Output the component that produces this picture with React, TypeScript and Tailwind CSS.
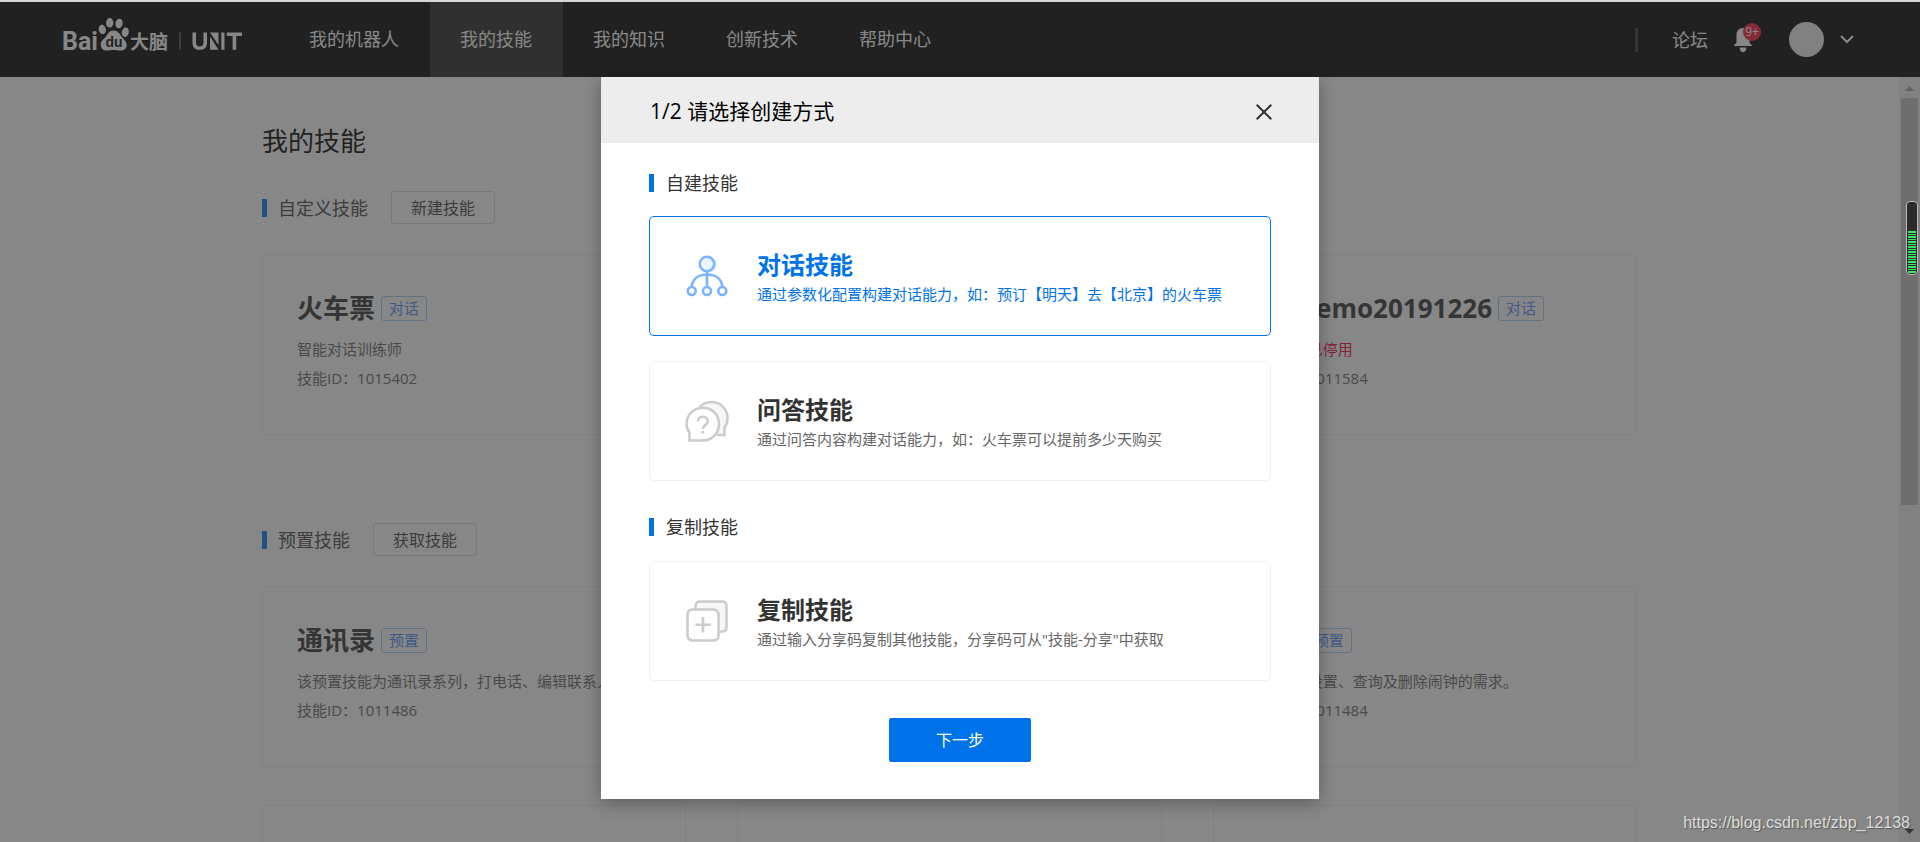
import React from "react";

type Skill = { name: string; tag: string; desc: string; id: string; disabled?: boolean };

const customSkills: Skill[] = [
  { name: "火车票", tag: "对话", desc: "智能对话训练师", id: "1015402" },
  { name: "", tag: "", desc: "", id: "" },
  { name: "智能demo20191226", tag: "对话", desc: "当前技能已停用", id: "1011584", disabled: true },
];

const presetSkills: Skill[] = [
  { name: "通讯录", tag: "预置", desc: "该预置技能为通讯录系列，打电话、编辑联系人等", id: "1011486" },
  { name: "", tag: "", desc: "", id: "" },
  { name: "闹钟", tag: "预置", desc: "满足用户设置、查询及删除闹钟的需求。", id: "1011484" },
  { name: "", tag: "", desc: "", id: "" },
  { name: "", tag: "", desc: "", id: "" },
  { name: "", tag: "", desc: "", id: "" },
];

function Logo() {
  return (
    <a href="#" aria-label="Baidu UNIT" className="block">
      <svg width="182" height="44" viewBox="0 0 182 44" fill="#fff" className="block">
        <text x="0" y="32" fontFamily="Roboto, sans-serif" fontWeight="700" fontSize="25">Bai</text>
        <ellipse cx="40.3" cy="11.5" rx="3.6" ry="4.8" transform="rotate(-12 40.3 11.5)" />
        <ellipse cx="47.7" cy="4.8" rx="3.6" ry="4.8" />
        <ellipse cx="57" cy="5.5" rx="3.6" ry="4.8" transform="rotate(10 57 5.5)" />
        <ellipse cx="63.3" cy="14.2" rx="3.5" ry="4.8" transform="rotate(10 63.3 14.2)" />
        <path d="M51.500 12.500c4 0 6 3 8 6 3 4 5.200 5 5.200 8.500 0 4-3 5.500-6 5.500-3 0-5-.5-7.200-.5s-4 .5-7 .5c-3 0-5.800-2-5.800-6 0-4 3-5 5.300-8 2-3 3.500-6 7.500-6z" />
        <text x="43.500" y="28.500" fill="#000" fontFamily="Liberation Sans, sans-serif" fontWeight="700" fontSize="14">du</text>
        <text x="68" y="30.500" fontFamily="Noto Sans CJK SC, sans-serif" fontWeight="700" fontSize="19">大脑</text>
        <rect x="117.500" y="14.500" width="1" height="17" opacity=".55" />
        <path d="M130.500 14.500h3.500v10.300c0 2.500 1.400 3.700 3.700 3.700s3.800-1.200 3.800-3.700V14.500h3.500v10.700c0 4.300-2.900 6.600-7.300 6.600s-7.200-2.300-7.200-6.600z" />
        <path d="M148 14.500h8.500v12.500zM148 18.500l8.500 13.300H148zM159.300 14.500h3.200v17.300h-3.200z" />
        <path d="M164.800 14.500H180V18h-5.800v13.800h-3.600V18h-5.800z" />
      </svg>
    </a>
  );
}

function Header() {
  const items = ["我的机器人", "我的技能", "我的知识", "创新技术", "帮助中心"];
  return (
    <header className="flex h-[75px] shrink-0 items-center justify-between bg-black pl-[62px] pr-[66px] text-lg text-white">
      <div className="flex h-full items-center">
        <Logo />
        <nav className="ml-[35px] flex h-full">
          {items.map((item) => (
            <a
              key={item}
              href="#"
              className={
                item === "我的技能"
                  ? "flex items-center bg-[#262626] pb-0.5 pl-[30px] pr-[31px]"
                  : "flex items-center pb-0.5 pl-[30px] pr-[31px]"
              }
            >
              {item}
            </a>
          ))}
        </nav>
      </div>
      <div className="flex items-center">
        <span className="mr-[34px] h-6 w-[3px] bg-[#333]" />
        <a href="#">论坛</a>
        <button type="button" aria-label="消息" className="relative ml-[26px] block">
          <svg width="18" height="26" viewBox="0 0 18 26" fill="#fff" className="block">
            <path d="M9 1c4.200 0 6.500 3 6.500 7v7.500c0 1 2.500 1.500 2.500 3.500H0c0-2 2.500-2.500 2.500-3.500V8c0-4 2.300-7 6.500-7zM5.500 20.500h7L11.500 24 9 25.500 6.500 24z" />
          </svg>
          <span className="absolute -top-1 left-[9px] flex size-[18px] items-center justify-center rounded-full bg-[#ff1838] text-xs leading-none">
            9+
          </span>
        </button>
        <span className="ml-[37px] size-[35px] rounded-full bg-[#f0f0f0]" />
        <button type="button" aria-label="账户菜单" className="ml-4">
          <svg width="14" height="9" viewBox="0 0 14 9" fill="none" stroke="#fff" strokeWidth="2" className="block">
            <path d="M1 1l6 6 6-6" />
          </svg>
        </button>
      </div>
    </header>
  );
}

function SkillCard({ skill }: { skill: Skill }) {
  return (
    <article className="h-[181px] rounded-[5px] border border-[#f0f0f0] pl-[34px] pt-[35px] text-[15px] text-[#666]">
      {skill.name && (
        <>
          <div className="flex h-9 items-center gap-1.5">
            <h3 className="text-[26px] font-bold leading-9 text-[#333]">{skill.name}</h3>
            <span className="flex h-[25px] items-center rounded-[3px] border border-[#a6c8ff] px-[7px] leading-none text-[#4a90ff]">
              {skill.tag}
            </span>
          </div>
          <p className={skill.disabled ? "mt-2 truncate leading-[30px] text-[#f5003d]" : "mt-2 truncate leading-[30px]"}>
            {skill.desc}
          </p>
          <p className="leading-[28px]">技能ID：{skill.id}</p>
        </>
      )}
    </article>
  );
}

function SkillSection({ title, action, skills }: { title: string; action: string; skills: Skill[] }) {
  return (
    <section>
      <div className="flex items-center">
        <span className="h-[18px] w-[5px] bg-[#0073eb]" />
        <h2 className="ml-[11px] text-lg leading-none text-[#444]">{title}</h2>
        <button
          type="button"
          className="ml-[23px] h-[33px] rounded-[3px] border border-[#d9d9d9] px-[19px] text-base leading-none text-[#444]"
        >
          {action}
        </button>
      </div>
      <div className="mt-[30px] grid grid-cols-3 gap-x-[51px] gap-y-[38px]">
        {skills.map((skill, i) => (
          <SkillCard key={i} skill={skill} />
        ))}
      </div>
    </section>
  );
}

function ScrollBar() {
  return (
    <div aria-hidden="true" className="flex w-[21px] shrink-0 flex-col items-center bg-[#f1f1f1]">
      <svg width="21" height="21" viewBox="0 0 21 21" className="block shrink-0">
        <path d="M6 14l4.500-5 4.500 5z" fill="#a3a3a3" />
      </svg>
      <span className="h-[407px] w-[17px] bg-[#c1c1c1]" />
      <svg width="21" height="21" viewBox="0 0 21 21" className="mt-auto block shrink-0">
        <path d="M6 8l4.500 5L15 8z" fill="#303030" />
      </svg>
    </div>
  );
}

function DialogIcon() {
  return (
    <svg width="44" height="44" viewBox="0 0 44 44" fill="none" stroke="#7ab3ff" strokeWidth="2.600" className="block">
      <circle cx="25" cy="11" r="7.500" fill="#eaf3ff" stroke="none" />
      <circle cx="22" cy="10" r="7.200" />
      <path d="M22 17v16M6.500 33c1-8 7-12.500 15.500-12.500S36.500 25 37.500 33" />
      <g fill="#fff">
        <circle cx="6.700" cy="37" r="4" />
        <circle cx="22" cy="37" r="4" />
        <circle cx="37.300" cy="37" r="4" />
      </g>
    </svg>
  );
}

function QuestionIcon() {
  return (
    <svg width="44" height="44" viewBox="0 0 44 44" fill="none" stroke="#ccc" strokeWidth="2.600" className="block">
      <path fill="#f7f7f7" d="M14 9C17 5 21.500 3 26.500 3c9 0 16 7 16 16 0 4-1 7-3 9.500V36h-8" />
      <path fill="#fff" d="M18 8.700c9 0 16 7 16 16.300s-7 16.500-16 16.500H4.500v-8C2.500 31 1.500 28.500 1.500 25 1.500 15.700 9 8.700 18 8.700z" />
      <path d="M13 22.500c0-3 2-4.800 4.800-4.800s4.900 1.800 4.900 4.600c0 3.900-4.900 3.700-4.900 7.700M17.800 32v2.600" />
    </svg>
  );
}

function CopyIcon() {
  return (
    <svg width="44" height="44" viewBox="0 0 44 44" fill="none" stroke="#ccc" strokeWidth="2.600" className="block">
      <path fill="#f7f7f7" d="M10.500 10V7c0-3 2-4.500 4.500-4.500h22c3 0 4.500 2 4.500 4.500v21c0 3-2 4.500-4.500 4.500h-3" />
      <rect x="2.500" y="10.500" width="31" height="31" rx="5" fill="#fff" />
      <path d="M18 18v15.500M10.300 25.800h15.500" />
    </svg>
  );
}

function Option(props: { icon: React.ReactNode; title: string; desc: string; selected?: boolean }) {
  return (
    <button
      type="button"
      aria-pressed={!!props.selected}
      className={
        props.selected
          ? "flex h-[120px] w-full items-center rounded-[5px] border border-[#0073eb] pl-[35px] text-left text-[#0073eb]"
          : "flex h-[120px] w-full items-center rounded-[5px] border border-[#f0f0f0] pl-[35px] text-left text-[#666]"
      }
    >
      {props.icon}
      <span className="ml-7 block pt-[3px]">
        <span className={props.selected ? "block text-2xl font-bold leading-8" : "block text-2xl font-bold leading-8 text-[#333]"}>
          {props.title}
        </span>
        <span className="block text-[15px] leading-[26px]">{props.desc}</span>
      </span>
    </button>
  );
}

function GroupTitle({ children }: { children: string }) {
  return (
    <h3 className="flex h-[18px] items-center gap-3 text-lg leading-none text-[#333]">
      <span className="h-[18px] w-[5px] bg-[#0073eb]" />
      {children}
    </h3>
  );
}

function CreateDialog() {
  return (
    <div
      role="dialog"
      aria-modal="true"
      aria-labelledby="dialog-title"
      className="w-full max-w-[718px] bg-white shadow-[0_4px_16px_rgba(0,0,0,0.3)]"
    >
      <div className="flex h-[66px] items-center justify-between bg-[#ededed] pl-[49px] pr-[47px] pt-[3px]">
        <h2 id="dialog-title" className="text-[21px] text-black">1/2 请选择创建方式</h2>
        <button type="button" aria-label="关闭">
          <svg width="16" height="16" viewBox="0 0 16 16" stroke="#333" strokeWidth="2" className="block">
            <path d="M.7.7l14.600 14.600M15.300.7L.7 15.300" />
          </svg>
        </button>
      </div>
      <div className="px-12 pb-[37px] pt-[31px]">
        <GroupTitle>自建技能</GroupTitle>
        <div className="mt-6 flex flex-col gap-[25px]">
          <Option selected icon={<DialogIcon />} title="对话技能" desc="通过参数化配置构建对话能力，如：预订【明天】去【北京】的火车票" />
          <Option icon={<QuestionIcon />} title="问答技能" desc="通过问答内容构建对话能力，如：火车票可以提前多少天购买" />
        </div>
        <div className="mt-[37px]">
          <GroupTitle>复制技能</GroupTitle>
        </div>
        <div className="mt-[25px]">
          <Option icon={<CopyIcon />} title="复制技能" desc={'通过输入分享码复制其他技能，分享码可从"技能-分享"中获取'} />
        </div>
        <button type="button" className="mx-auto mt-[37px] block h-11 w-[142px] rounded-[2px] bg-[#0073eb] text-base text-white">
          下一步
        </button>
      </div>
    </div>
  );
}

export default function App() {
  return (
    <div className="relative flex h-screen flex-col overflow-hidden border-t-2 border-[#d5d7dd] bg-white font-['Open_Sans','Noto_Sans_CJK_SC',sans-serif]">
      <Header />
      <div className="flex min-h-0 grow">
        <main className="grow overflow-hidden">
          <div className="mx-auto max-w-[1375px] pt-11">
            <h1 className="text-[26px] leading-10 text-black">我的技能</h1>
            <div className="mt-[30px] flex flex-col gap-[88px]">
              <SkillSection title="自定义技能" action="新建技能" skills={customSkills} />
              <SkillSection title="预置技能" action="获取技能" skills={presetSkills} />
            </div>
          </div>
        </main>
        <ScrollBar />
      </div>
      <div className="absolute inset-0 flex items-start justify-center bg-[rgba(55,55,55,0.6)] pt-[75px]">
        <CreateDialog />
      </div>
      <div aria-hidden="true" className="absolute right-[2px] top-[199px] flex h-[74px] w-3 flex-col justify-end rounded-[4px] border border-[#bbb] bg-[#2b2b2b] p-px">
        <span className="h-[42px] bg-[repeating-linear-gradient(180deg,#35e565_0px,#35e565_2px,#2b2b2b_2px,#2b2b2b_3px,#35e565_3px,#35e565_4px,#2b2b2b_4px,#2b2b2b_5px)]" />
      </div>
      <p className="absolute bottom-[7px] right-[10px] font-['Liberation_Sans',sans-serif] text-base leading-6 text-[#dcdcdc] [text-shadow:1px_1px_1px_rgba(60,60,60,0.6)]">
        https://blog.csdn.net/zbp_12138
      </p>
    </div>
  );
}
